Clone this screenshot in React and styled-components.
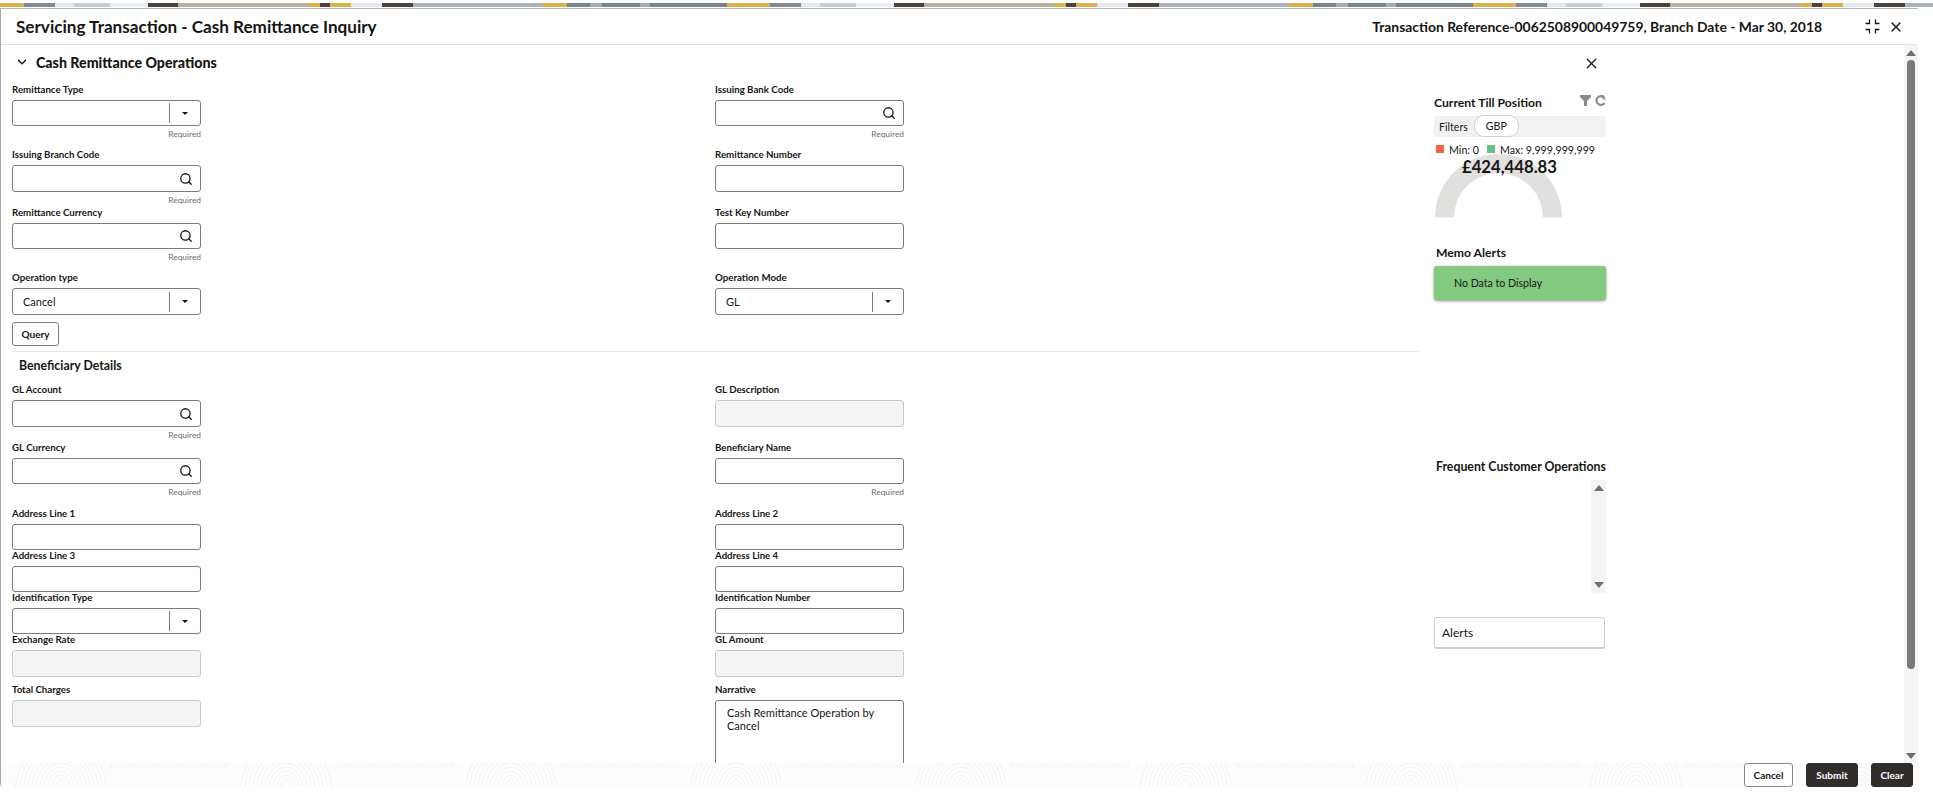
import styled, { createGlobalStyle } from "styled-components";
import { Search, X, ChevronDown } from "lucide-react";

const GlobalStyle = createGlobalStyle`
  html, body {
    margin: 0;
    padding: 0;
    background: #fff;
    overflow: hidden;
  }
  * {
    box-sizing: border-box;
  }
  body {
    font-family: Lato, "Noto Sans", "Liberation Sans", sans-serif;
    color: #161513;
  }
`;

const Page = styled.div`
  width: 1933px;
  height: 811px;
  background: #fff;
`;

const Banner = styled.div`
  height: 8px;
  border-top: 3px solid #fff;
  border-bottom: 1px solid #fff;
  background: repeating-linear-gradient(
    90deg,
    #d9b44c 0 24px,
    #7f8a96 24px 55px,
    #e0e7f1 55px 74px,
    #c4ccd6 74px 110px,
    #e8eef7 110px 148px,
    #4a423c 148px 178px,
    #b6ada3 178px 308px,
    #d9b44c 308px 320px,
    #4a423c 320px 330px,
    #d9b44c 330px 351px,
    #e3e8f0 351px 382px,
    #4a423c 382px 413px,
    #a9b1bb 413px 542px,
    #d9b44c 542px 567px,
    #79838e 567px 590px,
    #a4acb6 590px 602px,
    #79838e 602px 640px,
    #a4acb6 640px 650px,
    #79838e 650px 727px,
    #d9b44c 727px 746px
  );
`;

const Modal = styled.div`
  width: 1918px;
  height: 779px;
  display: flex;
  flex-direction: column;
  background: #fff;
  border-top: 1px solid #b5b5b5;
  border-left: 1px solid #a8a8a8;
  border-bottom-left-radius: 4px;
  overflow: hidden;
`;

const Header = styled.header`
  height: 36px;
  flex: none;
  display: flex;
  align-items: center;
  justify-content: space-between;
  padding: 0 14px 0 15px;
  border-bottom: 1px solid #e4e4e4;
`;

const Title = styled.h1`
  margin: 0;
  font-size: 17.1px;
  font-weight: 700;
  color: #161513;
`;

const HeaderRight = styled.div`
  display: flex;
  align-items: center;
`;

const HeaderInfo = styled.span`
  font-size: 13.9px;
  font-weight: 700;
  margin-right: 42px;
`;

const IconWrap = styled.span`
  display: inline-flex;
  align-items: center;
  justify-content: center;
  width: ${(p) => p.$w || 16}px;
  margin-left: ${(p) => p.$ml || 0}px;
`;

const Body = styled.div`
  flex: 1;
  min-height: 0;
  display: flex;
  overflow: hidden;
`;

const Main = styled.main`
  width: 1433px;
  flex: none;
  overflow: hidden;
`;

const SectionHead = styled.div`
  height: 36px;
  padding: 0 0 2px 14px;
  display: flex;
  align-items: center;
  gap: 7px;
  font-size: 14.2px;
  font-weight: 900;
`;

const Row = styled.div`
  display: grid;
  grid-template-columns: 703px 189px;
  height: ${(p) => p.$h}px;
  padding-left: 11px;
`;

const Field = styled.div`
  width: 189px;
  display: flex;
  flex-direction: column;
`;

const Label = styled.label`
  height: 19px;
  line-height: 16.5px;
  font-size: 9.7px;
  font-weight: 700;
  color: #161513;
  white-space: nowrap;
`;

const Control = styled.div`
  height: ${(p) => p.$h}px;
  flex: none;
  display: flex;
  align-items: center;
  justify-content: space-between;
  border: 1px solid ${(p) => (p.$off ? "#c8c8c8" : "#7d7b79")};
  border-radius: 3px;
  background: ${(p) => (p.$off ? "#f4f4f4" : "#fff")};
  font-size: 11px;
`;

const Value = styled.span`
  padding-left: 10px;
`;

const Hint = styled.div`
  margin-top: 2px;
  text-align: right;
  font-size: 8.4px;
  line-height: 12px;
  color: #6f6d6b;
`;

const SelectEnd = styled.div`
  width: 31px;
  height: 20px;
  flex: none;
  display: flex;
  align-items: center;
  justify-content: center;
  border-left: 1px solid #7d7b79;
`;

const Caret = styled.span`
  width: 0;
  height: 0;
  border-left: 3.5px solid transparent;
  border-right: 3.5px solid transparent;
  border-top: 3.5px solid #161513;
`;

const SearchEnd = styled.div`
  width: 28px;
  flex: none;
  display: flex;
  justify-content: center;
`;

const TextArea = styled.div`
  height: 90px;
  flex: none;
  padding: 5px 11px;
  border: 1px solid #7d7b79;
  border-radius: 3px;
  font-size: 11px;
  line-height: 13px;
`;

const QueryRow = styled.div`
  padding-left: 11px;
  height: 24px;
`;

const QueryButton = styled.button`
  width: 47px;
  height: 24px;
  padding: 0;
  background: #fff;
  border: 1px solid #7d7b79;
  border-radius: 3px;
  font-family: inherit;
  font-size: 10px;
  font-weight: 700;
  color: #161513;
`;

const Divider = styled.hr`
  margin: 5px 0 0 11px;
  width: 1407px;
  height: 1px;
  border: 0;
  background: #e4e4e4;
`;

const SubHead = styled.h2`
  height: 29px;
  margin: 0;
  padding: 5px 0 0 18px;
  font-size: 12.3px;
  line-height: 17px;
  font-weight: 700;
`;

const Sidebar = styled.aside`
  width: 172px;
  flex: none;
  display: flex;
  flex-direction: column;
`;

const CloseLine = styled.div`
  height: 38px;
  padding: 10px 6px 0 0;
  display: flex;
  justify-content: flex-end;
`;

const WidgetHead = styled.div`
  height: 33px;
  padding-top: 11px;
  display: flex;
  justify-content: space-between;
  font-size: 12.2px;
  line-height: 18px;
  font-weight: 700;
`;

const ToolIcons = styled.div`
  display: flex;
  gap: 4px;
  margin-top: 1px;
`;

const FilterBar = styled.div`
  height: 21px;
  display: flex;
  align-items: center;
  padding-left: 5px;
  gap: 6px;
  background: #f1f1f1;
  font-size: 10.6px;
`;

const Chip = styled.span`
  width: 45px;
  height: 22px;
  margin-top: -1px;
  margin-bottom: 1px;
  display: flex;
  align-items: center;
  justify-content: center;
  background: #fff;
  border: 1px solid #d0d0d0;
  border-radius: 10px;
`;

const Legend = styled.div`
  height: 24px;
  padding-left: 2px;
  display: flex;
  align-items: center;
  font-size: 10.7px;
  white-space: nowrap;
`;

const Swatch = styled.span`
  width: 8px;
  height: 8px;
  flex: none;
  background: ${(p) => p.$color};
  margin-right: 5px;
`;

const LegendText = styled.span`
  margin-right: 8px;
`;

const Gauge = styled.div`
  position: relative;
  height: 64px;
  margin-top: -7px;
  padding-left: 1px;
`;

const Amount = styled.div`
  position: absolute;
  left: 28px;
  top: 3px;
  font-size: 16.7px;
  line-height: 20px;
  font-weight: 700;
  white-space: nowrap;
`;

const MemoHead = styled.div`
  margin-top: 25px;
  height: 23px;
  padding-left: 2px;
  font-size: 12.2px;
  line-height: 20px;
  font-weight: 700;
`;

const MemoCard = styled.div`
  height: 34px;
  padding-left: 20px;
  display: flex;
  align-items: center;
  background: #82ca82;
  border-radius: 3px;
  box-shadow: 0 1px 3px rgba(0, 0, 0, 0.45);
  font-size: 10.6px;
`;

const FrequentHead = styled.div`
  margin-top: 158px;
  height: 22px;
  padding-left: 2px;
  font-size: 12.3px;
  line-height: 18px;
  font-weight: 700;
  white-space: nowrap;
`;

const MiniScroll = styled.div`
  width: 15px;
  height: 113px;
  margin-left: 157px;
  padding: 5px 0;
  display: flex;
  flex-direction: column;
  justify-content: space-between;
  align-items: center;
  background: #f3f3f3;
`;

const Arrow = styled.span`
  width: 0;
  height: 0;
  border-left: ${(p) => p.$s}px solid transparent;
  border-right: ${(p) => p.$s}px solid transparent;
  ${(p) => (p.$down ? "border-top" : "border-bottom")}: ${(p) => p.$s + 1}px solid #6f6f6f;
`;

const AlertsBox = styled.div`
  margin-top: 24px;
  height: 32px;
  width: 171px;
  padding-left: 7px;
  display: flex;
  align-items: center;
  background: #fff;
  border: 1px solid #cfcfcf;
  border-bottom-width: 2px;
  border-radius: 3px;
  font-size: 12px;
`;

const ScrollTrack = styled.div`
  width: 14px;
  margin-left: auto;
  flex: none;
  padding: 5px 0 4px;
  display: flex;
  flex-direction: column;
  align-items: center;
  background: #f5f5f5;
`;

const ScrollThumb = styled.div`
  width: 8px;
  height: 609px;
  margin-top: 4px;
  margin-bottom: auto;
  border-radius: 4px;
  background: #7a7a7a;
`;

const Footer = styled.footer`
  position: relative;
  height: 24px;
  flex: none;
  display: flex;
  justify-content: flex-end;
  gap: 13px;
  padding-right: 5px;
  background: #fdfdfd;
  overflow: hidden;
`;

const Pattern = styled.svg`
  position: absolute;
  left: 0;
  top: 0;
`;

const FootButton = styled.button`
  position: relative;
  width: ${(p) => p.$w}px;
  height: 24px;
  padding: 0;
  border-radius: 3px;
  border: 1px solid ${(p) => (p.$dark ? "#312d2a" : "#8a8886")};
  background: ${(p) => (p.$dark ? "#312d2a" : "#fff")};
  color: ${(p) => (p.$dark ? "#fff" : "#161513")};
  font-family: inherit;
  font-size: 10px;
  font-weight: 700;
`;

const firstRows = [
  {
    h: 65,
    c: 26,
    left: { label: "Remittance Type", kind: "select", hint: true },
    right: { label: "Issuing Bank Code", kind: "search", hint: true },
  },
  {
    h: 58,
    c: 27,
    left: { label: "Issuing Branch Code", kind: "search", hint: true },
    right: { label: "Remittance Number" },
  },
  {
    h: 65,
    c: 26,
    left: { label: "Remittance Currency", kind: "search", hint: true },
    right: { label: "Test Key Number" },
  },
  {
    h: 53,
    c: 27,
    left: { label: "Operation type", kind: "select", value: "Cancel" },
    right: { label: "Operation Mode", kind: "select", value: "GL" },
  },
];

const secondRows = [
  {
    h: 58,
    c: 27,
    left: { label: "GL Account", kind: "search", hint: true },
    right: { label: "GL Description", off: true },
  },
  {
    h: 66,
    c: 26,
    left: { label: "GL Currency", kind: "search", hint: true },
    right: { label: "Beneficiary Name", hint: true },
  },
  { h: 42, c: 26, left: { label: "Address Line 1" }, right: { label: "Address Line 2" } },
  { h: 42, c: 26, left: { label: "Address Line 3" }, right: { label: "Address Line 4" } },
  {
    h: 42,
    c: 26,
    left: { label: "Identification Type", kind: "select" },
    right: { label: "Identification Number" },
  },
  {
    h: 50,
    c: 27,
    left: { label: "Exchange Rate", off: true },
    right: { label: "GL Amount", off: true },
  },
];

function FormField({ field, height }) {
  return (
    <Field>
      <Label>{field.label}</Label>
      <Control $h={height} $off={field.off}>
        <Value>{field.value}</Value>
        {field.kind === "select" && (
          <SelectEnd>
            <Caret />
          </SelectEnd>
        )}
        {field.kind === "search" && (
          <SearchEnd>
            <Search size={14} strokeWidth={2.2} color="#161513" />
          </SearchEnd>
        )}
      </Control>
      {field.hint && <Hint>Required</Hint>}
    </Field>
  );
}

function FormRows({ rows }) {
  return rows.map((row) => (
    <Row key={row.left.label} $h={row.h}>
      <FormField field={row.left} height={row.c} />
      <FormField field={row.right} height={row.c} />
    </Row>
  ));
}

// arcs and hatching of the faint fingerprint texture behind the footer
const arcs = [];
for (let cx = 60; cx < 1933; cx += 225) {
  for (let r = 6; r < 48; r += 4) {
    arcs.push(`M${cx - r} 30 A${r} ${r + 8} 0 0 1 ${cx + r} 30`);
  }
  for (let x = cx + 50; x < cx + 170; x += 3) {
    arcs.push(`M${x} 0 V5`);
  }
}

function ExpandIcon() {
  return (
    <svg width="15" height="15" viewBox="0 0 15 15" fill="none" stroke="#161513" strokeWidth="1.3">
      <path d="M4.5 0.5V4.5H0.5M10.5 0.5V4.5H14.5M4.5 14.5V10.5H0.5M10.5 14.5V10.5H14.5" />
    </svg>
  );
}

function FilterIcon() {
  return (
    <svg width="11" height="11" viewBox="0 0 11 11" fill="#8a8a8a">
      <path d="M0 0H11V2L7 6V11H4V6L0 2Z" />
    </svg>
  );
}

function RefreshIcon() {
  return (
    <svg width="11" height="11" viewBox="0 0 11 11" fill="none" stroke="#8a8a8a" strokeWidth="2.2">
      <path d="M9.5 3A4.4 4.4 0 1 0 9.5 8" />
      <path d="M8 0V4H11" strokeWidth="1.2" />
    </svg>
  );
}

export default function App() {
  return (
    <Page>
      <GlobalStyle />
      <Banner />
      <Modal>
        <Header>
          <Title>Servicing Transaction - Cash Remittance Inquiry</Title>
          <HeaderRight>
            <HeaderInfo>Transaction Reference-0062508900049759, Branch Date - Mar 30, 2018</HeaderInfo>
            <IconWrap>
              <ExpandIcon />
            </IconWrap>
            <IconWrap $ml={8}>
              <X size={18} strokeWidth={2} color="#161513" />
            </IconWrap>
          </HeaderRight>
        </Header>
        <Body>
          <Main>
            <SectionHead>
              <ChevronDown size={14} strokeWidth={2.4} />
              Cash Remittance Operations
            </SectionHead>
            <FormRows rows={firstRows} />
            <QueryRow>
              <QueryButton>Query</QueryButton>
            </QueryRow>
            <Divider />
            <SubHead>Beneficiary Details</SubHead>
            <FormRows rows={secondRows} />
            <Row $h={90}>
              <Field>
                <Label>Total Charges</Label>
                <Control $h={27} $off />
              </Field>
              <Field>
                <Label>Narrative</Label>
                <TextArea>Cash Remittance Operation by Cancel</TextArea>
              </Field>
            </Row>
          </Main>
          <Sidebar>
            <CloseLine>
              <X size={17} strokeWidth={1.8} color="#161513" />
            </CloseLine>
            <WidgetHead>
              Current Till Position
              <ToolIcons>
                <FilterIcon />
                <RefreshIcon />
              </ToolIcons>
            </WidgetHead>
            <FilterBar>
              Filters
              <Chip>GBP</Chip>
            </FilterBar>
            <Legend>
              <Swatch $color="#f0654a" />
              <LegendText>Min: 0</LegendText>
              <Swatch $color="#67c186" />
              <LegendText>Max: 9,999,999,999</LegendText>
            </Legend>
            <Gauge>
              <Amount>£424,448.83</Amount>
              <svg width="128" height="64" viewBox="0 0 128 64">
                <path d="M0 63.5A63.5 63.5 0 0 1 127 63.5H108A44.5 44.5 0 0 0 19 63.5Z" fill="#e0e0df" />
              </svg>
            </Gauge>
            <MemoHead>Memo Alerts</MemoHead>
            <MemoCard>No Data to Display</MemoCard>
            <FrequentHead>Frequent Customer Operations</FrequentHead>
            <MiniScroll>
              <Arrow $s={5} />
              <Arrow $s={5} $down />
            </MiniScroll>
            <AlertsBox>Alerts</AlertsBox>
          </Sidebar>
          <ScrollTrack>
            <Arrow $s={5} />
            <ScrollThumb />
            <Arrow $s={5} $down />
          </ScrollTrack>
        </Body>
        <Footer>
          <Pattern width="1918" height="24" viewBox="0 0 1918 24" fill="none" stroke="#f2f2f2" strokeWidth="1">
            <path d={arcs.join(" ")} />
          </Pattern>
          <FootButton $w={49}>Cancel</FootButton>
          <FootButton $w={52} $dark>
            Submit
          </FootButton>
          <FootButton $w={42} $dark>
            Clear
          </FootButton>
        </Footer>
      </Modal>
    </Page>
  );
}
